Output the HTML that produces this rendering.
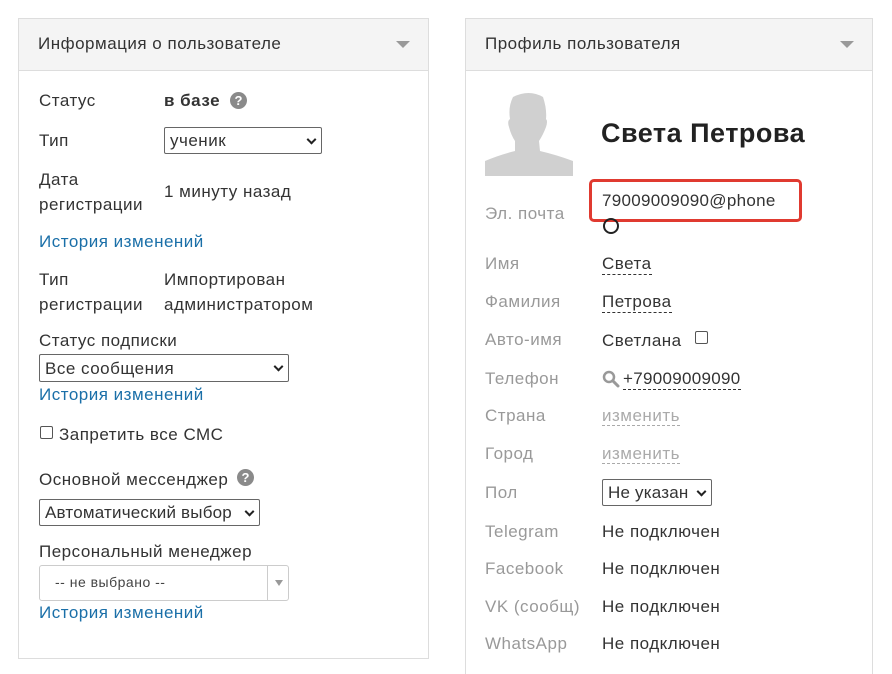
<!DOCTYPE html>
<html><head><meta charset="utf-8"><style>
*{box-sizing:border-box;margin:0;padding:0}
html,body{width:892px;height:674px;overflow:hidden}
body{background:#fff;font-family:"Liberation Sans",sans-serif;font-size:17px;letter-spacing:0.5px;color:#333;position:relative}
.p{position:absolute;border:1px solid #ddd;background:#fff}
.h{position:absolute;left:0;right:0;top:0;height:52px;background:#f4f4f4;border-bottom:1px solid #ddd}
.h span{position:absolute;left:19px;top:15px;font-size:17px;color:#333}
.tri{position:absolute;right:18px;top:22px;width:0;height:0;border-left:7px solid transparent;border-right:7px solid transparent;border-top:7px solid #999}
.t{position:absolute;line-height:20px;white-space:nowrap}
.l{color:#999}
.a{color:#1a6fa8}
.sel{position:absolute;border:1px solid #666;border-radius:2px;background:#fff;line-height:20px;padding-left:5px;white-space:nowrap}
.sel i{position:absolute;right:6px;top:50%;width:7px;height:7px;border-right:2px solid #222;border-bottom:2px solid #222;transform:translateY(-70%) rotate(45deg)}
.d{border-bottom:1px dashed #333;padding-bottom:1px}
.dl{border-bottom:1px dashed #aaa;color:#aaa}
.q{position:absolute;width:17px;height:17px;border-radius:50%;background:#8a8a8a;color:#fff;font-weight:bold;font-size:13px;text-align:center;line-height:17px;letter-spacing:0}
.cb{position:absolute;width:13px;height:13px;border:1px solid #555;border-radius:2px;background:#fff}
</style></head><body>
<div class="p" style="left:18px;top:18px;width:411px;height:641px">
 <div class="h"><span>Информация о пользователе</span><div class="tri"></div></div>
</div>
<div class="t" style="left:39px;top:91px">Статус</div>
<div class="t" style="left:164px;top:91px;font-weight:bold">в базе</div>
<div class="q" style="left:230px;top:92px">?</div>
<div class="t" style="left:39px;top:131px">Тип</div>
<div class="sel" style="left:164px;top:127px;width:158px;height:27px;padding-top:3px">ученик<i></i></div>
<div class="t" style="left:39px;top:170px">Дата</div>
<div class="t" style="left:39px;top:195px">регистрации</div>
<div class="t" style="left:164px;top:182px">1 минуту назад</div>
<div class="t a" style="left:39px;top:232px">История изменений</div>
<div class="t" style="left:39px;top:270px">Тип</div>
<div class="t" style="left:39px;top:295px">регистрации</div>
<div class="t" style="left:164px;top:270px">Импортирован</div>
<div class="t" style="left:164px;top:295px">администратором</div>
<div class="t" style="left:39px;top:331px">Статус подписки</div>
<div class="sel" style="left:39px;top:354px;width:250px;height:28px;padding-top:4px">Все сообщения<i></i></div>
<div class="t a" style="left:39px;top:385px">История изменений</div>
<div class="cb" style="left:40px;top:426px"></div>
<div class="t" style="left:59px;top:425px">Запретить все СМС</div>
<div class="t" style="left:39px;top:470px">Основной мессенджер</div>
<div class="q" style="left:237px;top:469px">?</div>
<div class="sel" style="left:39px;top:499px;width:221px;height:27px;padding-top:3px;letter-spacing:0.2px">Автоматический выбор<i></i></div>
<div class="t" style="left:39px;top:542px">Персональный менеджер</div>
<div style="position:absolute;left:39px;top:565px;width:250px;height:36px;border:1px solid #ccc;border-radius:3px"><div style="position:absolute;left:15px;top:8px;font-size:14px;color:#444">-- не выбрано --</div><div style="position:absolute;left:227px;top:0;bottom:0;border-left:1px solid #ccc"></div><div style="position:absolute;left:235px;top:14px;border-left:4px solid transparent;border-right:4px solid transparent;border-top:6px solid #999"></div></div>
<div class="t a" style="left:39px;top:603px">История изменений</div>

<div class="p" style="left:465px;top:18px;width:408px;height:680px">
 <div class="h"><span>Профиль пользователя</span><div class="tri"></div></div>
</div>
<svg style="position:absolute;left:485px;top:91px" width="88" height="85" viewBox="0 0 88 85"><path fill="#d0d0d0" d="M28 6 Q44 -2 58 6 Q62 18 61 28 Q63 30 61 36 Q58 44 54 50 L55 60 Q72 64 88 70 L88 85 L0 85 L0 70 Q14 64 30 60 L30 50 Q26 44 24 36 Q22 30 25 28 Q23 16 28 6Z"/></svg>
<div class="t" style="left:601px;top:118px;font-size:27px;line-height:30px;font-weight:bold;color:#222">Света Петрова</div>
<div style="position:absolute;left:589px;top:179px;width:213px;height:43px;border:3px solid #e03a30;border-radius:5px"></div>
<div class="t" style="left:602px;top:191px;letter-spacing:0.3px">79009009090@phone</div>
<div style="position:absolute;left:603px;top:218px;width:16px;height:16px;border:2px solid #222;border-radius:50%"></div>
<div class="t l" style="left:485px;top:204px">Эл. почта</div>
<div class="t l" style="left:485px;top:254px">Имя</div><div class="t" style="left:602px;top:254px"><span class="d">Света</span></div>
<div class="t l" style="left:485px;top:292px">Фамилия</div><div class="t" style="left:602px;top:292px"><span class="d">Петрова</span></div>
<div class="t l" style="left:485px;top:330px">Авто-имя</div><div class="t" style="left:602px;top:331px">Светлана</div><div class="cb" style="left:695px;top:331px"></div>
<div class="t l" style="left:485px;top:369px">Телефон</div>
<svg style="position:absolute;left:602px;top:370px" width="18" height="18" viewBox="0 0 18 18"><circle cx="7" cy="7" r="5" fill="none" stroke="#999" stroke-width="2.5"/><path d="M11 11 L16 16" stroke="#999" stroke-width="3" stroke-linecap="round"/></svg>
<div class="t" style="left:623px;top:369px;letter-spacing:0.3px"><span class="d">+79009009090</span></div>
<div class="t l" style="left:485px;top:406px">Страна</div><div class="t" style="left:602px;top:406px"><span class="dl">изменить</span></div>
<div class="t l" style="left:485px;top:444px">Город</div><div class="t" style="left:602px;top:444px"><span class="dl">изменить</span></div>
<div class="t l" style="left:485px;top:483px">Пол</div>
<div class="sel" style="left:602px;top:479px;width:110px;height:27px;padding-top:3px;letter-spacing:0.2px">Не указан<i></i></div>
<div class="t l" style="left:485px;top:522px">Telegram</div><div class="t" style="left:602px;top:522px">Не подключен</div>
<div class="t l" style="left:485px;top:559px">Facebook</div><div class="t" style="left:602px;top:559px">Не подключен</div>
<div class="t l" style="left:485px;top:597px">VK (сообщ)</div><div class="t" style="left:602px;top:597px">Не подключен</div>
<div class="t l" style="left:485px;top:634px">WhatsApp</div><div class="t" style="left:602px;top:634px">Не подключен</div>
</body></html>
